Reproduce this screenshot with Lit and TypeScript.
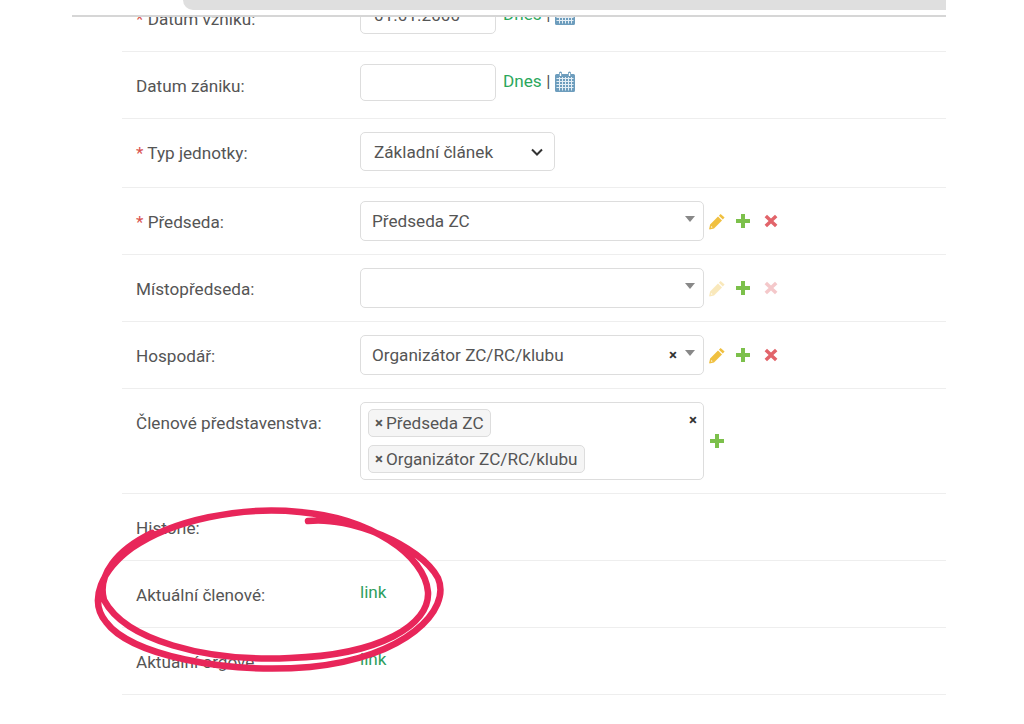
import { LitElement, html, css, svg } from "lit";
import { customElement } from "lit/decorators.js";

const pencil = (faded = false) => html`<svg class="ic ${faded ? "faded" : ""}" width="16" height="17" viewBox="0 0 16 16"><path fill="#f0c040" d="M11.600.4l4 3.700-1.800 1.900-3.900-3.800zM9 3 13 7l-8 8-4.300 1-.6-.6 1-4.300z"/><path fill="#fff" d="M2.400 12.500l1.200 1.200-1.700.5z"/></svg>`;
const plus = html`<svg class="ic" width="14" height="14" viewBox="0 0 14 14"><path fill="#7cc04b" d="M5 0h4v5h5v4H9v5H5V9H0V5h5z"/></svg>`;
const cross = (faded = false) => html`<svg class="ic ${faded ? "faded" : ""}" width="14" height="14" viewBox="0 0 14 14"><path fill="#e2646a" d="M3 .8 7 4.600 11 .8 13.400 3.200 9.400 7l4 3.800-2.400 2.400L7 9.400l-4 3.800L.6 10.800l4-3.800-4-3.800z"/></svg>`;
const calendar = html`<svg class="cal" width="20" height="21" viewBox="0 0 20 21"><path fill="#6d9dbd" d="M1.500 3H4V2a1.500 1.500 0 0 1 3 0v1h6V2a1.500 1.500 0 0 1 3 0v1h2.500A1.500 1.500 0 0 1 20 4.500V19.500A1.500 1.500 0 0 1 18.500 21H1.500A1.500 1.500 0 0 1 0 19.500V4.500A1.500 1.500 0 0 1 1.500 3z"/><path fill="#fff" d="M4.800 2h1.400v3H4.800zM13.800 2h1.400v3h-1.400z"/><path stroke="#e4eef5" stroke-width="1" fill="none" d="M1.500 7.500h17M1.500 10.500h17M1.500 13.500h17M1.500 16.500h17M4.500 6v13.500M7.500 6v13.500M10.500 6v13.500M13.500 6v13.500M16.500 6v13.500"/></svg>`;

@customElement("app-root")
export class AppRoot extends LitElement {
  static styles = css`
    :host { display: block; height: 724px; overflow: hidden; background: #fff; position: relative;
      font-family: Roboto, "Liberation Sans", sans-serif; font-size: 17.150px; color: #555; }
    .chrome { height: 15px; margin-left: 72px; width: 874px; box-sizing: border-box; padding-left: 111px; }
    .pill { height: 10px; background: #dfdfdf; border-bottom-left-radius: 10px; }
    .sheet { margin-left: 72px; width: 874px; height: 709px; overflow: hidden; box-sizing: border-box;
      border-top: 2px solid #d6d6d6; padding-left: 50px; }
    .row { display: grid; grid-template-columns: 238px 1fr; box-sizing: border-box; border-bottom: 1px solid #eee; }
    .first { height: 35px; overflow: hidden; }
    .first .label { padding-top: 0; margin-top: -7px; }
    .first .val { margin-top: -20px; }
    .r67 { height: 67px; padding-top: 13px; }
    .r67d { height: 67px; padding-top: 12px; }
    .r67d .label { padding-top: 13px; }
    .r69 { height: 69px; padding-top: 13px; }
    .r69 .label { padding-top: 12px; }
    .r105 { height: 105px; padding-top: 13px; }
    .label { padding: 12px 0 0 14px; line-height: 19px; white-space: nowrap; }
    .val { display: flex; align-items: flex-start; }
    .input { width: 136px; height: 37px; box-sizing: border-box; border: 1px solid #ddd; border-radius: 5px;
      padding: 0 13px; line-height: 35px; background: #fff; }
    .today { margin-left: 7px; display: flex; align-items: center; gap: 4.500px; height: 34px; color: #2ba75c; }
    .today span { color: #555; }
    .cal { display: block; margin-top: 1px; }
    .select { width: 195px; height: 39px; box-sizing: border-box; border: 1px solid #ddd; border-radius: 5px;
      display: flex; align-items: center; justify-content: space-between; padding: 0 10px 0 13px; color: #555; }
    .s2 { width: 344px; height: 40px; box-sizing: border-box; border: 1px solid #ddd; border-radius: 5px;
      display: flex; align-items: center; padding: 0 8px 0 11px; color: #555; }
    .s2 .txt { flex: 1; }
    .caret { width: 0; height: 0; border-left: 5.500px solid transparent; border-right: 5.500px solid transparent;
      border-top: 6px solid #888; margin-top: -4px; }
    .clear { font-weight: 700; color: #333; font-size: 15px; margin-right: 8px; line-height: 14px; }
    .tools { display: flex; align-items: center; height: 40px; margin-left: 5px; }
    .tools .ic:nth-child(2) { margin-left: 11px; }
    .tools .ic:nth-child(3) { margin-left: 14px; }
    .ic { display: block; }
    .faded { opacity: .35; }
    .tools2 { display: flex; align-items: center; height: 78px; margin-left: 6px; }
    .multi { width: 344px; height: 78px; box-sizing: border-box; border: 1px solid #ddd; border-radius: 5px;
      padding: 6px 7px; position: relative; display: flex; flex-direction: column; align-items: flex-start; gap: 8px; }
    .tag { height: 28px; box-sizing: border-box; border: 1px solid #ddd; border-radius: 5px; background: #f5f5f5;
      padding: 0 6px; line-height: 26px; color: #555; display: flex; gap: 3px; white-space: nowrap; }
    .tag b { color: #555; font-size: 15px; }
    .multi .clear { position: absolute; right: 0; top: 10px; margin-right: 6px; }
    .link { color: #2e9e5e; line-height: 19px; padding-top: 9px; }
    .mark { position: absolute; left: 0; top: 0; pointer-events: none; }
    .mark path { fill: none; stroke: #e8265a; stroke-width: 6.500; stroke-linecap: round; stroke-linejoin: round; }
  `;

  private dropdown(text: string, clear: boolean, faded: boolean) {
    return html`<div class="val">
      <div class="s2"><span class="txt">${text}</span>${clear ? html`<span class="clear">×</span>` : ""}<span class="caret"></span></div>
      <div class="tools">${pencil(faded)}${plus}${cross(faded)}</div>
    </div>`;
  }

  render() {
    return html`
      <div class="chrome"><div class="pill"></div></div>
      <div class="sheet">
        <div class="row first">
          <div class="label"><span style="color:#d9534f">*</span> Datum vzniku:</div>
          <div class="val"><div class="input">01.01.2000</div><div class="today">Dnes <span>|</span> ${calendar}</div></div>
        </div>
        <div class="row r67d">
          <div class="label">Datum zániku:</div>
          <div class="val"><div class="input"></div><div class="today">Dnes <span>|</span> ${calendar}</div></div>
        </div>
        <div class="row r69">
          <div class="label"><span style="color:#d9534f">*</span> Typ jednotky:</div>
          <div class="val"><div class="select">Základní článek
            <svg width="14" height="14" viewBox="0 0 14 14"><path d="M2 4.500l5 5 5-5" fill="none" stroke="#333" stroke-width="2"/></svg></div></div>
        </div>
        <div class="row r67">
          <div class="label"><span style="color:#d9534f">*</span> Předseda:</div>
          ${this.dropdown("Předseda ZC", false, false)}
        </div>
        <div class="row r67"><div class="label">Místopředseda:</div>${this.dropdown("", false, true)}</div>
        <div class="row r67"><div class="label">Hospodář:</div>${this.dropdown("Organizátor ZC/RC/klubu", true, false)}</div>
        <div class="row r105">
          <div class="label">Členové představenstva:</div>
          <div class="val">
            <div class="multi">
              <span class="clear">×</span>
              <div class="tag"><b>×</b>Předseda ZC</div>
              <div class="tag"><b>×</b>Organizátor ZC/RC/klubu</div>
            </div>
            <div class="tools2">${plus}</div>
          </div>
        </div>
        <div class="row r67"><div class="label">Historie:</div><div></div></div>
        <div class="row r67"><div class="label">Aktuální členové:</div><div class="link">link</div></div>
        <div class="row r67"><div class="label">Aktuální orgove:</div><div class="link">link</div></div>
      </div>
      <svg class="mark" width="1024" height="724" viewBox="0 0 1024 724">
        ${svg`<path d="M308 521C350 516 420 545 438 578C452 610 405 658 310 667C225 674 130 655 106 622C88 600 102 570 132 548C172 520 240 506 300 512C370 518 425 555 428 592C430 625 380 655 290 658C205 662 125 640 104 600C97 575 117 550 152 533"/>`}
      </svg>
    `;
  }
}
